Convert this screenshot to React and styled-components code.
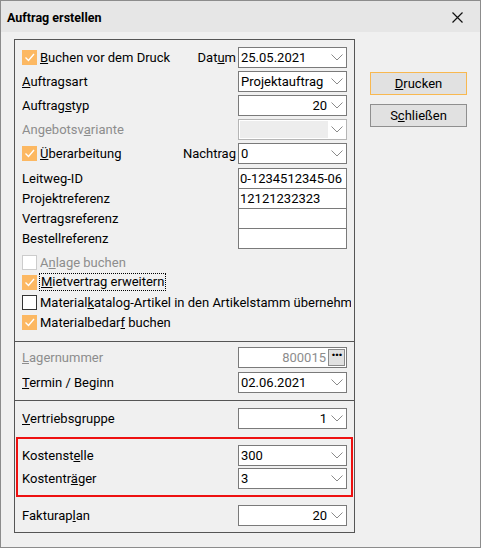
import styled, { createGlobalStyle } from "styled-components";

const GlobalStyle = createGlobalStyle`
  body {
    margin: 0;
    background: #f0f0f0;
    font-family: Roboto, "Liberation Sans", Arial, sans-serif;
    font-size: 13px;
    color: #000;
  }
`;

function Chevron() {
  return (
    <ChevronSvg width="12" height="7" viewBox="0 0 12 7">
      <polyline points="0.5,0.5 6,6 11.5,0.5" fill="none" stroke="#8a8a8a" strokeWidth="1" />
    </ChevronSvg>
  );
}

function Combo({ value, right, disabled }) {
  return (
    <ComboBox $disabled={disabled}>
      <ComboValue $right={right} $disabled={disabled}>
        {value}
      </ComboValue>
      <Chevron />
    </ComboBox>
  );
}

function Check({ checked, disabled }) {
  return (
    <CheckBox $checked={checked} $disabled={disabled}>
      {checked && (
        <svg width="13" height="13" viewBox="0 0 13 13">
          <polyline points="2.5,6.5 5.5,9.5 11,3" fill="none" stroke="#fff" strokeWidth="1.4" />
        </svg>
      )}
    </CheckBox>
  );
}

export default function App() {
  return (
    <>
      <GlobalStyle />
      <Window>
        <TitleBar>
          <Title>Auftrag erstellen</Title>
          <CloseButton>
            <svg width="11" height="11" viewBox="0 0 11 11">
              <path d="M0.5 0.5 L10.5 10.5 M10.5 0.5 L0.5 10.5" stroke="#111" strokeWidth="1.2" />
            </svg>
          </CloseButton>
        </TitleBar>

        <Body>
          <Panel>
            <Section>
              <ComboRows>
                <Row>
                  <CheckLabel>
                    <Check checked />
                    <span>
                      <U>B</U>uchen vor dem Druck
                    </span>
                  </CheckLabel>
                  <SideLabel>
                    Dat<U>u</U>m
                  </SideLabel>
                  <Combo value="25.05.2021" />
                </Row>
                <Row>
                  <Label>
                    <U>A</U>uftragsart
                  </Label>
                  <Combo value="Projektauftrag" />
                </Row>
                <Row>
                  <Label>
                    Auftrag<U>s</U>typ
                  </Label>
                  <Combo value="20" right />
                </Row>
                <Row>
                  <Label $disabled>
                    Angebotsv<U>a</U>riante
                  </Label>
                  <Combo value="" disabled />
                </Row>
                <Row>
                  <CheckLabel>
                    <Check checked />
                    <span>
                      <U>Ü</U>berarbeitung
                    </span>
                  </CheckLabel>
                  <SideLabel>
                    Nachtra<U>g</U>
                  </SideLabel>
                  <Combo value="0" />
                </Row>
              </ComboRows>

              <FieldRows>
                <FieldRow>
                  <Label>Leitweg-ID</Label>
                  <TextInput>0-1234512345-06</TextInput>
                </FieldRow>
                <FieldRow>
                  <Label>Projektreferenz</Label>
                  <TextInput>12121232323</TextInput>
                </FieldRow>
                <FieldRow>
                  <Label>Vertragsreferenz</Label>
                  <TextInput />
                </FieldRow>
                <FieldRow>
                  <Label>Bestellreferenz</Label>
                  <TextInput />
                </FieldRow>
              </FieldRows>

              <CheckRows>
                <CheckRow>
                  <Check disabled />
                  <Label $disabled>
                    A<U>n</U>lage buchen
                  </Label>
                </CheckRow>
                <CheckRow>
                  <Check checked />
                  <FocusLabel>
                    <U>M</U>ietvertrag erweitern
                  </FocusLabel>
                </CheckRow>
                <CheckRow>
                  <Check />
                  <Label>
                    Material<U>k</U>atalog-Artikel in den Artikelstamm übernehmen
                  </Label>
                </CheckRow>
                <CheckRow>
                  <Check checked />
                  <Label>
                    Materialbedar<U>f</U> buchen
                  </Label>
                </CheckRow>
              </CheckRows>
            </Section>

            <Section $divided $pad="5px 7px 7px">
              <ComboRows $gap={4}>
                <Row>
                  <Label $disabled>
                    <U>L</U>agernummer
                  </Label>
                  <LookupBox>
                    <LookupValue>800015</LookupValue>
                    <DotsButton>···</DotsButton>
                  </LookupBox>
                </Row>
                <Row>
                  <Label>
                    <U>T</U>ermin / Beginn
                  </Label>
                  <Combo value="02.06.2021" />
                </Row>
              </ComboRows>
            </Section>

            <Section $divided $pad="7px 7px 6px">
              <Row>
                <Label>
                  <U>V</U>ertriebsgruppe
                </Label>
                <Combo value="1" right />
              </Row>
              <Highlight>
                <Row>
                  <Label>
                    Kostenst<U>e</U>lle
                  </Label>
                  <Combo value="300" />
                </Row>
                <Row>
                  <Label>
                    Kostentr<U>ä</U>ger
                  </Label>
                  <Combo value="3" />
                </Row>
              </Highlight>
              <Row>
                <Label>
                  Fakturap<U>l</U>an
                </Label>
                <Combo value="20" right />
              </Row>
            </Section>
          </Panel>

          <Buttons>
            <Button $primary>
              <U>D</U>rucken
            </Button>
            <Button>
              S<U>c</U>hließen
            </Button>
          </Buttons>
        </Body>
      </Window>
    </>
  );
}

const Window = styled.div`
  width: 481px;
  height: 548px;
  box-sizing: border-box;
  border: 1px solid #8c8c8c;
  background: #f0f0f0;
  display: flex;
  flex-direction: column;
`;

const TitleBar = styled.div`
  height: 31px;
  background: #e6e6e6;
  display: flex;
  align-items: center;
  justify-content: space-between;
  padding: 0 17px 0 6px;
`;

const Title = styled.div`
  font-weight: 700;
  font-size: 12.5px;
  padding-top: 1px;
`;

const CloseButton = styled.div`
  display: flex;
  align-items: center;
  padding-top: 1px;
`;

const Body = styled.div`
  display: flex;
  align-items: flex-start;
  padding: 7px 0 0 13px;
`;

const Panel = styled.div`
  width: 341px;
  box-sizing: border-box;
  border: 1px solid #555;
  display: flex;
  flex-direction: column;
`;

const Section = styled.div`
  display: flex;
  flex-direction: column;
  gap: 8px;
  padding: ${({ $pad }) => $pad || "7px 7px 9px"};
  border-top: ${({ $divided }) => ($divided ? "1px solid #555" : "none")};
`;

const ComboRows = styled.div`
  display: flex;
  flex-direction: column;
  gap: ${({ $gap }) => $gap ?? 3}px;
`;

const Row = styled.div`
  display: flex;
  align-items: center;
  height: 21px;
`;

const Label = styled.div`
  flex: 1;
  white-space: nowrap;
  overflow: hidden;
  color: ${({ $disabled }) => ($disabled ? "#8d8d8d" : "#000")};
`;

const SideLabel = styled.div`
  margin-right: 2px;
  white-space: nowrap;
`;

const CheckLabel = styled.div`
  flex: 1;
  display: flex;
  align-items: center;
  gap: 3px;
`;

const U = styled.span`
  text-decoration: underline;
  text-underline-offset: 1px;
`;

const ComboBox = styled.div`
  width: 109px;
  height: 21px;
  box-sizing: border-box;
  flex-shrink: 0;
  border: 1px solid ${({ $disabled }) => ($disabled ? "#b5b5b5" : "#7a7a7a")};
  background: #fff;
  display: flex;
  align-items: center;
`;

const ComboValue = styled.div`
  flex: 1;
  align-self: stretch;
  display: flex;
  align-items: center;
  justify-content: ${({ $right }) => ($right ? "flex-end" : "flex-start")};
  padding: 0 ${({ $right }) => ($right ? "4px" : "2px")} 0 2px;
  margin: ${({ $disabled }) => ($disabled ? "1px 3px 1px 1px" : "0")};
  background: ${({ $disabled }) => ($disabled ? "#ededed" : "transparent")};
  overflow: hidden;
  white-space: nowrap;
`;

const ChevronSvg = styled.svg`
  margin-right: 3px;
  flex-shrink: 0;
`;

const FieldRows = styled.div`
  display: flex;
  flex-direction: column;
  margin-top: -4px;
`;

const FieldRow = styled.div`
  display: flex;
  align-items: center;
  height: 20px;
`;

const TextInput = styled.div`
  width: 109px;
  height: 21px;
  box-sizing: border-box;
  flex-shrink: 0;
  border: 1px solid #7a7a7a;
  background: #fff;
  padding: 0 1px;
  margin-bottom: -1px;
  display: flex;
  align-items: center;
  white-space: nowrap;
  overflow: hidden;
`;

const CheckRows = styled.div`
  display: flex;
  flex-direction: column;
  margin: -4px -4px 0 0;
  overflow: hidden;
`;

const CheckRow = styled.div`
  display: flex;
  align-items: center;
  gap: 3px;
  height: 20px;
`;

const CheckBox = styled.div`
  width: 15px;
  height: 15px;
  box-sizing: border-box;
  flex-shrink: 0;
  display: flex;
  align-items: center;
  justify-content: center;
  background: ${({ $checked }) => ($checked ? "#fcb862" : "#fff")};
  border: 1px solid
    ${({ $checked, $disabled }) => ($checked ? "#fcb862" : $disabled ? "#cccccc" : "#333")};
`;

const FocusLabel = styled.div`
  outline: 1px dotted #000;
  outline-offset: -1px;
  height: 18px;
  line-height: 18px;
  overflow: hidden;
  padding: 0 2px;
  margin-left: -1px;
  white-space: nowrap;
`;

const LookupBox = styled.div`
  width: 109px;
  height: 21px;
  box-sizing: border-box;
  flex-shrink: 0;
  border: 1px solid #7a7a7a;
  background: #fff;
  display: flex;
  align-items: center;
`;

const LookupValue = styled.div`
  flex: 1;
  text-align: right;
  color: #8d8d8d;
  padding-right: 2px;
`;

const DotsButton = styled.div`
  width: 17px;
  height: 17px;
  box-sizing: border-box;
  margin-right: 1px;
  border: 1px solid #8a8a8a;
  background: #e1e1e1;
  font-weight: 900;
  font-size: 14px;
  line-height: 11px;
  text-align: center;
  letter-spacing: -1px;
`;

const Highlight = styled.div`
  display: flex;
  flex-direction: column;
  gap: 2px;
  margin: 0 -6px;
  padding: 6px 4px;
  border: 2px solid #ee1111;
`;

const Buttons = styled.div`
  display: flex;
  flex-direction: column;
  gap: 9px;
  margin: 33px 0 0 15px;
`;

const Button = styled.div`
  width: 97px;
  height: 23px;
  box-sizing: border-box;
  border: 1px solid ${({ $primary }) => ($primary ? "#f8b850" : "#8f8f8f")};
  background: #e1e1e1;
  display: flex;
  align-items: center;
  justify-content: center;
`;
